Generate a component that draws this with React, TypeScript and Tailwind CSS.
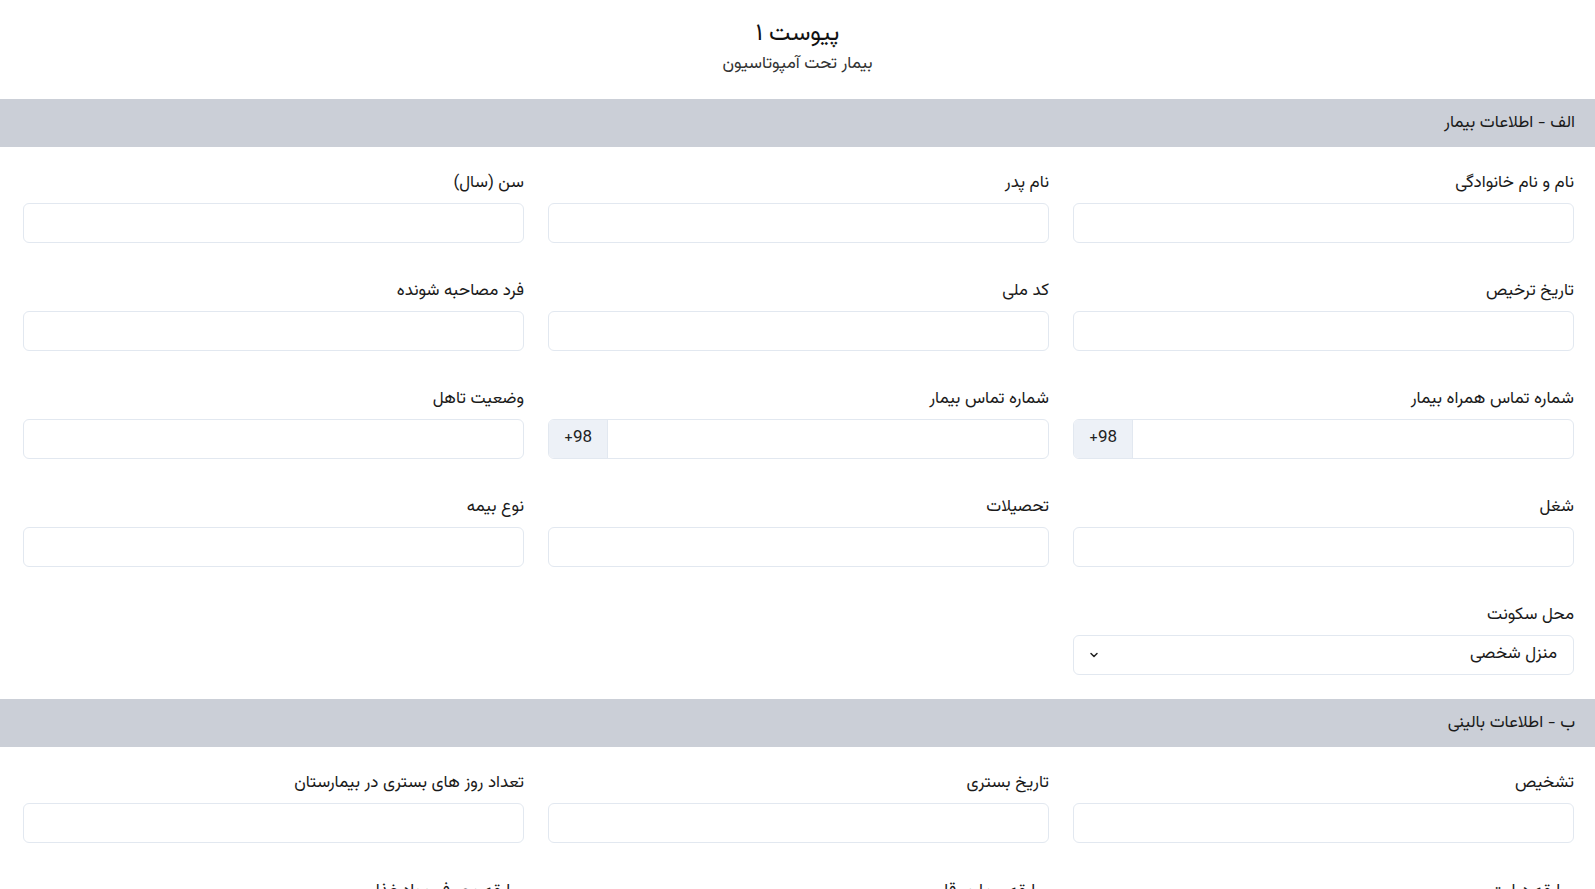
import React from "react";

const FONT = { fontFamily: "'Vazirmatn', 'Noto Sans Arabic', 'DejaVu Sans', sans-serif" };

type Field = { label: string; kind?: "text" | "phone" | "select"; value?: string };

function Input() {
  return <div className="h-10 w-full rounded-md border border-[#e2e8f0] bg-white" />;
}

function Phone() {
  return (
    <div dir="ltr" className="flex h-10 w-full overflow-hidden rounded-md border border-[#e2e8f0] bg-white">
      <div className="flex w-[59px] items-center justify-center border-r border-[#e2e8f0] bg-[#edf1f7] text-[17px] text-[#222]">
        +98
      </div>
      <div className="flex-1" />
    </div>
  );
}

function Select({ value }: { value: string }) {
  return (
    <div className="flex h-10 w-full items-center justify-between rounded-md border border-[#e2e8f0] bg-white pl-[14px] pr-4">
      <span className="text-[17px] text-[#1a1a1a]">{value}</span>
      <svg width="12" height="12" viewBox="0 0 24 24" fill="none" stroke="#222" strokeWidth="3" strokeLinecap="round" strokeLinejoin="round">
        <path d="M6 9l6 6 6-6" />
      </svg>
    </div>
  );
}

function FieldView({ f }: { f: Field }) {
  return (
    <div className="flex flex-col">
      <label className="mb-2 text-[17px] leading-6 text-[#1a1a1a]">{f.label}</label>
      {f.kind === "phone" ? <Phone /> : f.kind === "select" ? <Select value={f.value || ""} /> : <Input />}
    </div>
  );
}

function Section({ title, fields }: { title: string; fields: Field[] }) {
  return (
    <section>
      <div className="flex h-12 items-center bg-[#cbcfd7] pr-5 pt-[2px] text-[17px] text-[#1a1a1a]">{title}</div>
      <div className="grid grid-cols-3 gap-x-6 gap-y-9 pl-[23px] pr-[21px] py-6">
        {fields.map((f, i) => (
          <FieldView key={i} f={f} />
        ))}
      </div>
    </section>
  );
}

export default function App() {
  const a: Field[] = [
    { label: "نام و نام خانوادگی" },
    { label: "نام پدر" },
    { label: "سن (سال)" },
    { label: "تاریخ ترخیص" },
    { label: "کد ملی" },
    { label: "فرد مصاحبه شونده" },
    { label: "شماره تماس همراه بیمار", kind: "phone" },
    { label: "شماره تماس بیمار", kind: "phone" },
    { label: "وضعیت تاهل" },
    { label: "شغل" },
    { label: "تحصیلات" },
    { label: "نوع بیمه" },
    { label: "محل سکونت", kind: "select", value: "منزل شخصی" },
  ];
  const b: Field[] = [
    { label: "تشخیص" },
    { label: "تاریخ بستری" },
    { label: "تعداد روز های بستری در بیمارستان" },
    { label: "سابقه دیابت" },
    { label: "سابقه بیماری قلبی" },
    { label: "سابقه مصرف مواد غذایی" },
  ];
  return (
    <div dir="rtl" style={FONT} className="min-h-screen bg-white text-[#1a1a1a]">
      <header className="flex flex-col items-center pt-[18px] pb-[23px]">
        <h1 className="text-2xl leading-8 text-[#111]">پیوست ۱</h1>
        <p className="mt-0.5 text-[17px] leading-6 text-[#333]">بیمار تحت آمپوتاسیون</p>
      </header>
      <Section title="الف - اطلاعات بیمار" fields={a} />
      <Section title="ب - اطلاعات بالینی" fields={b} />
    </div>
  );
}
